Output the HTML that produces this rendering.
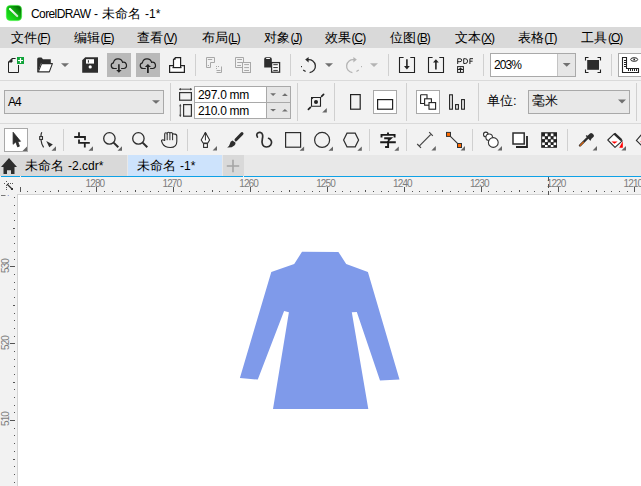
<!DOCTYPE html>
<html><head><meta charset="utf-8">
<style>
*{box-sizing:border-box;margin:0;padding:0}
html,body{width:641px;height:486px;overflow:hidden;background:#fff;font-family:"Liberation Sans",sans-serif;color:#000}
.a{position:absolute}
.t{position:absolute;white-space:nowrap;line-height:1}
svg{position:absolute;left:0;top:0}
u{text-decoration:underline;text-underline-offset:1px;text-decoration-thickness:1px}
</style></head><body>
<div class="a" style="left:0px;top:0px;width:641px;height:27px;background:#fff;"></div>
<div class="a" style="left:0px;top:27px;width:641px;height:21px;background:#d9d9d9;"></div>
<div class="a" style="left:0px;top:48px;width:641px;height:32px;background:#f2f2f2;"></div>
<div class="a" style="left:0px;top:80px;width:641px;height:1px;background:#dadada;"></div>
<div class="a" style="left:0px;top:81px;width:641px;height:42px;background:#f2f2f2;"></div>
<div class="a" style="left:0px;top:123px;width:641px;height:1px;background:#dadada;"></div>
<div class="a" style="left:0px;top:124px;width:641px;height:31px;background:#f2f2f2;"></div>
<div class="a" style="left:0px;top:155px;width:641px;height:21px;background:#e8e8e8;"></div>
<div class="a" style="left:0px;top:155px;width:127px;height:21px;background:#d9d9d9;"></div>
<div class="a" style="left:128px;top:155px;width:94px;height:21px;background:#cde3fc;"></div>
<div class="a" style="left:223px;top:155px;width:21px;height:21px;background:#d9d9d9;"></div>
<div class="a" style="left:0px;top:176px;width:641px;height:1px;background:#0ea1e6;"></div>
<div class="a" style="left:20px;top:176px;width:1px;height:1px;background:#e8f4fb;"></div>
<div class="a" style="left:0px;top:176px;width:1px;height:1px;background:#e8f4fb;"></div>
<div class="a" style="left:243px;top:176px;width:1px;height:1px;background:#e8f4fb;"></div>
<div class="a" style="left:0px;top:177px;width:641px;height:17px;background:#f2f2f2;"></div>
<div class="a" style="left:0px;top:177px;width:17px;height:309px;background:#f2f2f2;"></div>
<div class="a" style="left:17px;top:194px;width:624px;height:1px;background:#d4d4d4;"></div>
<div class="a" style="left:17px;top:194px;width:1px;height:292px;background:#d4d4d4;"></div>
<div class="a" style="left:107px;top:53px;width:24px;height:24px;background:#b9b9b9;"></div>
<div class="a" style="left:136px;top:53px;width:24px;height:24px;background:#b9b9b9;"></div>
<div class="a" style="left:195px;top:54px;width:1px;height:22px;background:#d0d0d0;"></div>
<div class="a" style="left:290px;top:54px;width:1px;height:22px;background:#d0d0d0;"></div>
<div class="a" style="left:388px;top:54px;width:1px;height:22px;background:#d0d0d0;"></div>
<div class="a" style="left:483px;top:54px;width:1px;height:22px;background:#d0d0d0;"></div>
<div class="a" style="left:611px;top:54px;width:1px;height:22px;background:#d0d0d0;"></div>
<div class="a" style="left:490px;top:53px;width:86px;height:24px;background:#fff;border:1px solid #a9a9a9"></div>
<div class="a" style="left:557px;top:54px;width:18px;height:22px;background:#e6e6e6;border-left:1px solid #c4c4c4"></div>
<div class="a" style="left:618px;top:53px;width:30px;height:24px;background:#fff;border:1px solid #a9a9a9"></div>
<div class="a" style="left:4px;top:90px;width:160px;height:24px;background:#e8e8e8;border:1px solid #a9a9a9"></div>
<div class="a" style="left:170px;top:83px;width:1px;height:38px;background:#d0d0d0;"></div>
<div class="a" style="left:297px;top:83px;width:1px;height:38px;background:#d0d0d0;"></div>
<div class="a" style="left:334px;top:83px;width:1px;height:38px;background:#d0d0d0;"></div>
<div class="a" style="left:406px;top:83px;width:1px;height:38px;background:#d0d0d0;"></div>
<div class="a" style="left:478px;top:83px;width:1px;height:38px;background:#d0d0d0;"></div>
<div class="a" style="left:636px;top:83px;width:1px;height:38px;background:#d0d0d0;"></div>
<div class="a" style="left:194px;top:86px;width:97px;height:33px;background:#fff;border:1px solid #a9a9a9"></div>
<div class="a" style="left:267px;top:87px;width:23px;height:31px;background:#e6e6e6;"></div>
<div class="a" style="left:266px;top:87px;width:1px;height:31px;background:#a9a9a9;"></div>
<div class="a" style="left:195px;top:102px;width:95px;height:1px;background:#a9a9a9;"></div>
<div class="a" style="left:373px;top:90px;width:24px;height:24px;background:#fff;border:1px solid #a9a9a9"></div>
<div class="a" style="left:416px;top:90px;width:24px;height:24px;background:#fff;border:1px solid #a9a9a9"></div>
<div class="a" style="left:528px;top:90px;width:102px;height:24px;background:#e8e8e8;border:1px solid #a9a9a9"></div>
<div class="a" style="left:4px;top:128px;width:24px;height:24px;background:#fff;border:1px solid #a9a9a9"></div>
<div class="a" style="left:63px;top:129px;width:1px;height:22px;background:#d0d0d0;"></div>
<div class="a" style="left:187px;top:129px;width:1px;height:22px;background:#d0d0d0;"></div>
<div class="a" style="left:369px;top:129px;width:1px;height:22px;background:#d0d0d0;"></div>
<div class="a" style="left:406px;top:129px;width:1px;height:22px;background:#d0d0d0;"></div>
<div class="a" style="left:472px;top:129px;width:1px;height:22px;background:#d0d0d0;"></div>
<div class="a" style="left:567px;top:129px;width:1px;height:22px;background:#d0d0d0;"></div>
<div class="t" style="left:31px;top:8px;font-size:12px;letter-spacing:-0.6px;color:#000;">CorelDRAW</div>
<div class="t" style="left:94px;top:8px;font-size:12px;color:#000;">-</div>
<div class="t" style="left:102px;top:7px;font-size:13px;color:#000;">未命名</div>
<div class="t" style="left:145px;top:8px;font-size:12px;color:#000;">-1*</div>
<div class="t" style="left:10.7px;top:31px;font-size:13px;color:#000;">文件</div>
<div class="t" style="left:37.3px;top:32px;font-size:12px;letter-spacing:-1px;color:#000;">(<u>F</u>)</div>
<div class="t" style="left:73.9px;top:31px;font-size:13px;color:#000;">编辑</div>
<div class="t" style="left:100.5px;top:32px;font-size:12px;letter-spacing:-1px;color:#000;">(<u>E</u>)</div>
<div class="t" style="left:136.8px;top:31px;font-size:13px;color:#000;">查看</div>
<div class="t" style="left:163.4px;top:32px;font-size:12px;letter-spacing:-1px;color:#000;">(<u>V</u>)</div>
<div class="t" style="left:201.5px;top:31px;font-size:13px;color:#000;">布局</div>
<div class="t" style="left:228.1px;top:32px;font-size:12px;letter-spacing:-1px;color:#000;">(<u>L</u>)</div>
<div class="t" style="left:263.8px;top:31px;font-size:13px;color:#000;">对象</div>
<div class="t" style="left:290.4px;top:32px;font-size:12px;letter-spacing:-1px;color:#000;">(<u>J</u>)</div>
<div class="t" style="left:324.9px;top:31px;font-size:13px;color:#000;">效果</div>
<div class="t" style="left:351.5px;top:32px;font-size:12px;letter-spacing:-1px;color:#000;">(<u>C</u>)</div>
<div class="t" style="left:390.1px;top:31px;font-size:13px;color:#000;">位图</div>
<div class="t" style="left:416.7px;top:32px;font-size:12px;letter-spacing:-1px;color:#000;">(<u>B</u>)</div>
<div class="t" style="left:454.5px;top:31px;font-size:13px;color:#000;">文本</div>
<div class="t" style="left:481.1px;top:32px;font-size:12px;letter-spacing:-1px;color:#000;">(<u>X</u>)</div>
<div class="t" style="left:517.6px;top:31px;font-size:13px;color:#000;">表格</div>
<div class="t" style="left:544.2px;top:32px;font-size:12px;letter-spacing:-1px;color:#000;">(<u>T</u>)</div>
<div class="t" style="left:581.3px;top:31px;font-size:13px;color:#000;">工具</div>
<div class="t" style="left:607.9px;top:32px;font-size:12px;letter-spacing:-1px;color:#000;">(<u>O</u>)</div>
<div class="t" style="left:494px;top:59px;font-size:12px;letter-spacing:-0.9px;color:#000;">203%</div>
<div class="t" style="left:8px;top:96px;font-size:12px;letter-spacing:-1px;color:#000;">A4</div>
<div class="t" style="left:198px;top:89px;font-size:12px;letter-spacing:-0.3px;color:#000;">297.0 mm</div>
<div class="t" style="left:198px;top:105px;font-size:12px;letter-spacing:-0.3px;color:#000;">210.0 mm</div>
<div class="t" style="left:487px;top:94px;font-size:13px;color:#000;">单位:</div>
<div class="t" style="left:532px;top:94px;font-size:13px;color:#000;">毫米</div>
<div class="t" style="left:25px;top:159px;font-size:13px;color:#000;">未命名</div>
<div class="t" style="left:68px;top:160px;font-size:12px;color:#000;">-2.cdr*</div>
<div class="t" style="left:137px;top:159px;font-size:13px;color:#000;">未命名</div>
<div class="t" style="left:180px;top:160px;font-size:12px;color:#000;">-1*</div>
<div class="t" style="left:623.6px;top:178.6px;font-size:10px;letter-spacing:-0.9px;color:#7c7c7c;">1210</div>
<div class="t" style="left:546.8px;top:178.6px;font-size:10px;letter-spacing:-0.9px;color:#7c7c7c;">1220</div>
<div class="t" style="left:469.9px;top:178.6px;font-size:10px;letter-spacing:-0.9px;color:#7c7c7c;">1230</div>
<div class="t" style="left:393.1px;top:178.6px;font-size:10px;letter-spacing:-0.9px;color:#7c7c7c;">1240</div>
<div class="t" style="left:316.2px;top:178.6px;font-size:10px;letter-spacing:-0.9px;color:#7c7c7c;">1250</div>
<div class="t" style="left:239.3px;top:178.6px;font-size:10px;letter-spacing:-0.9px;color:#7c7c7c;">1260</div>
<div class="t" style="left:162.5px;top:178.6px;font-size:10px;letter-spacing:-0.9px;color:#7c7c7c;">1270</div>
<div class="t" style="left:85.6px;top:178.6px;font-size:10px;letter-spacing:-0.9px;color:#7c7c7c;">1280</div>
<div class="t" style="left:-2px;top:262.7px;width:20px;text-align:center;font-size:10px;letter-spacing:-0.9px;color:#7c7c7c;transform:rotate(-90deg);transform-origin:8px 5px">530</div>
<div class="t" style="left:-2px;top:339.5px;width:20px;text-align:center;font-size:10px;letter-spacing:-0.9px;color:#7c7c7c;transform:rotate(-90deg);transform-origin:8px 5px">520</div>
<div class="t" style="left:-2px;top:416.4px;width:20px;text-align:center;font-size:10px;letter-spacing:-0.9px;color:#7c7c7c;transform:rotate(-90deg);transform-origin:8px 5px">510</div>
<svg width="641" height="486" viewBox="0 0 641 486"><rect x="20" y="187" width="1" height="5" fill="#555"/><rect x="27" y="191" width="1" height="1" fill="#555"/><rect x="35" y="191" width="1" height="1" fill="#555"/><rect x="43" y="191" width="1" height="1" fill="#555"/><rect x="50" y="191" width="1" height="1" fill="#555"/><rect x="58" y="190" width="1" height="2" fill="#555"/><rect x="66" y="191" width="1" height="1" fill="#555"/><rect x="73" y="191" width="1" height="1" fill="#555"/><rect x="81" y="191" width="1" height="1" fill="#555"/><rect x="89" y="191" width="1" height="1" fill="#555"/><rect x="96" y="187" width="1" height="5" fill="#555"/><rect x="104" y="191" width="1" height="1" fill="#555"/><rect x="112" y="191" width="1" height="1" fill="#555"/><rect x="120" y="191" width="1" height="1" fill="#555"/><rect x="127" y="191" width="1" height="1" fill="#555"/><rect x="135" y="190" width="1" height="2" fill="#555"/><rect x="143" y="191" width="1" height="1" fill="#555"/><rect x="150" y="191" width="1" height="1" fill="#555"/><rect x="158" y="191" width="1" height="1" fill="#555"/><rect x="166" y="191" width="1" height="1" fill="#555"/><rect x="173" y="187" width="1" height="5" fill="#555"/><rect x="181" y="191" width="1" height="1" fill="#555"/><rect x="189" y="191" width="1" height="1" fill="#555"/><rect x="196" y="191" width="1" height="1" fill="#555"/><rect x="204" y="191" width="1" height="1" fill="#555"/><rect x="212" y="190" width="1" height="2" fill="#555"/><rect x="219" y="191" width="1" height="1" fill="#555"/><rect x="227" y="191" width="1" height="1" fill="#555"/><rect x="235" y="191" width="1" height="1" fill="#555"/><rect x="242" y="191" width="1" height="1" fill="#555"/><rect x="250" y="187" width="1" height="5" fill="#555"/><rect x="258" y="191" width="1" height="1" fill="#555"/><rect x="266" y="191" width="1" height="1" fill="#555"/><rect x="273" y="191" width="1" height="1" fill="#555"/><rect x="281" y="191" width="1" height="1" fill="#555"/><rect x="289" y="190" width="1" height="2" fill="#555"/><rect x="296" y="191" width="1" height="1" fill="#555"/><rect x="304" y="191" width="1" height="1" fill="#555"/><rect x="312" y="191" width="1" height="1" fill="#555"/><rect x="319" y="191" width="1" height="1" fill="#555"/><rect x="327" y="187" width="1" height="5" fill="#555"/><rect x="335" y="191" width="1" height="1" fill="#555"/><rect x="342" y="191" width="1" height="1" fill="#555"/><rect x="350" y="191" width="1" height="1" fill="#555"/><rect x="358" y="191" width="1" height="1" fill="#555"/><rect x="365" y="190" width="1" height="2" fill="#555"/><rect x="373" y="191" width="1" height="1" fill="#555"/><rect x="381" y="191" width="1" height="1" fill="#555"/><rect x="388" y="191" width="1" height="1" fill="#555"/><rect x="396" y="191" width="1" height="1" fill="#555"/><rect x="404" y="187" width="1" height="5" fill="#555"/><rect x="412" y="191" width="1" height="1" fill="#555"/><rect x="419" y="191" width="1" height="1" fill="#555"/><rect x="427" y="191" width="1" height="1" fill="#555"/><rect x="435" y="191" width="1" height="1" fill="#555"/><rect x="442" y="190" width="1" height="2" fill="#555"/><rect x="450" y="191" width="1" height="1" fill="#555"/><rect x="458" y="191" width="1" height="1" fill="#555"/><rect x="465" y="191" width="1" height="1" fill="#555"/><rect x="473" y="191" width="1" height="1" fill="#555"/><rect x="481" y="187" width="1" height="5" fill="#555"/><rect x="488" y="191" width="1" height="1" fill="#555"/><rect x="496" y="191" width="1" height="1" fill="#555"/><rect x="504" y="191" width="1" height="1" fill="#555"/><rect x="511" y="191" width="1" height="1" fill="#555"/><rect x="519" y="190" width="1" height="2" fill="#555"/><rect x="527" y="191" width="1" height="1" fill="#555"/><rect x="534" y="191" width="1" height="1" fill="#555"/><rect x="542" y="191" width="1" height="1" fill="#555"/><rect x="550" y="191" width="1" height="1" fill="#555"/><rect x="558" y="187" width="1" height="5" fill="#555"/><rect x="565" y="191" width="1" height="1" fill="#555"/><rect x="573" y="191" width="1" height="1" fill="#555"/><rect x="581" y="191" width="1" height="1" fill="#555"/><rect x="588" y="191" width="1" height="1" fill="#555"/><rect x="596" y="190" width="1" height="2" fill="#555"/><rect x="604" y="191" width="1" height="1" fill="#555"/><rect x="611" y="191" width="1" height="1" fill="#555"/><rect x="619" y="191" width="1" height="1" fill="#555"/><rect x="627" y="191" width="1" height="1" fill="#555"/><rect x="634" y="187" width="1" height="5" fill="#555"/><rect x="14" y="197" width="1" height="1" fill="#555"/><rect x="14" y="205" width="1" height="1" fill="#555"/><rect x="14" y="213" width="1" height="1" fill="#555"/><rect x="14" y="220" width="1" height="1" fill="#555"/><rect x="13" y="228" width="2" height="1" fill="#555"/><rect x="14" y="236" width="1" height="1" fill="#555"/><rect x="14" y="243" width="1" height="1" fill="#555"/><rect x="14" y="251" width="1" height="1" fill="#555"/><rect x="14" y="259" width="1" height="1" fill="#555"/><rect x="10" y="266" width="5" height="1" fill="#555"/><rect x="14" y="274" width="1" height="1" fill="#555"/><rect x="14" y="282" width="1" height="1" fill="#555"/><rect x="14" y="289" width="1" height="1" fill="#555"/><rect x="14" y="297" width="1" height="1" fill="#555"/><rect x="13" y="305" width="2" height="1" fill="#555"/><rect x="14" y="313" width="1" height="1" fill="#555"/><rect x="14" y="320" width="1" height="1" fill="#555"/><rect x="14" y="328" width="1" height="1" fill="#555"/><rect x="14" y="336" width="1" height="1" fill="#555"/><rect x="10" y="343" width="5" height="1" fill="#555"/><rect x="14" y="351" width="1" height="1" fill="#555"/><rect x="14" y="359" width="1" height="1" fill="#555"/><rect x="14" y="366" width="1" height="1" fill="#555"/><rect x="14" y="374" width="1" height="1" fill="#555"/><rect x="13" y="382" width="2" height="1" fill="#555"/><rect x="14" y="389" width="1" height="1" fill="#555"/><rect x="14" y="397" width="1" height="1" fill="#555"/><rect x="14" y="405" width="1" height="1" fill="#555"/><rect x="14" y="412" width="1" height="1" fill="#555"/><rect x="10" y="420" width="5" height="1" fill="#555"/><rect x="14" y="428" width="1" height="1" fill="#555"/><rect x="14" y="435" width="1" height="1" fill="#555"/><rect x="14" y="443" width="1" height="1" fill="#555"/><rect x="14" y="451" width="1" height="1" fill="#555"/><rect x="13" y="459" width="2" height="1" fill="#555"/><rect x="14" y="466" width="1" height="1" fill="#555"/><rect x="14" y="474" width="1" height="1" fill="#555"/><rect x="14" y="482" width="1" height="1" fill="#555"/><rect x="1" y="195" width="4.5" height="1" fill="#777"/><rect x="7.8" y="195" width="1" height="1" fill="#8a9ad0"/><line x1="548.5" y1="177" x2="548.5" y2="195" stroke="#555" stroke-dasharray="4,3"/><g fill="#555"><rect x="6" y="181" width="1" height="1"/><rect x="4" y="183" width="1" height="1"/><rect x="8" y="183" width="1" height="1"/><rect x="10" y="183" width="1" height="1"/><rect x="12" y="183" width="1" height="1"/><rect x="6" y="185" width="1" height="1"/><rect x="6" y="187" width="1" height="1"/><rect x="6" y="189" width="1" height="1"/></g><path d="M7,184 L12,189" stroke="#333" stroke-width="1.2"/><rect x="11" y="188" width="2" height="2" fill="#333"/><polygon fill="#7f9aea" points="302,251.8 338.4,251.9 346.2,264 367.9,272 399.5,379.6 380,380.6 356.8,312 351.8,312.2 368.3,408.9 273,408.9 288.9,312.2 284.1,311 257.8,379.6 239.9,377.9 271.3,272 294.2,264.1"/><defs><linearGradient id="lg" x1="0" y1="1" x2="1" y2="0"><stop offset="0" stop-color="#22ee22"/><stop offset="0.45" stop-color="#12c412"/><stop offset="1" stop-color="#005200"/></linearGradient>
<linearGradient id="lw" x1="0" y1="0" x2="1" y2="1"><stop offset="0" stop-color="#ffffff"/><stop offset="1" stop-color="#c8e8c8"/></linearGradient></defs>
<rect x="6.4" y="5.4" width="15.2" height="15.2" rx="4" fill="url(#lg)" stroke="#3cf03c" stroke-width="0.7"/>
<path d="M10,9 L17.2,16" stroke="url(#lw)" stroke-width="2.2" stroke-linecap="round"/>

<!-- new doc -->
<g fill="none" stroke="#222" stroke-width="1">
<path d="M8.5,62 V72.5 H18.5 V65"/><path d="M12,58.5 H15.6"/>
</g>
<path d="M8.5,62 L12,58.5 V62 Z" fill="#222" stroke="#222" stroke-width="1" stroke-linejoin="round"/>
<rect x="17" y="57" width="7" height="7" fill="#11a33a"/>
<path d="M18,60.5 H23 M20.5,58 V63" stroke="#fff" stroke-width="1.2"/>
<!-- open folder -->
<path d="M37.2,72.6 V59 Q37.2,57.4 38.8,57.4 H41.5 L43,59.2 H50.8 V63 H41.1 L37.7,72.6 Z" fill="#2d2d2d"/>
<path d="M41.6,63.6 H52.4 L49.3,71.9 H38.3 Z" fill="#fff" stroke="#2d2d2d" stroke-width="1.1" stroke-linejoin="round"/>
<path d="M61,63.3 H69 L65,66.9 Z" fill="#707070"/>
<!-- save -->
<path d="M82.2,60.3 L85.3,57.2 H98 V72.8 H82.2 Z" fill="#2d2d2d"/>
<rect x="86" y="59.2" width="8" height="4.4" fill="#fff"/>
<rect x="87.9" y="60.2" width="1" height="2.4" fill="#2d2d2d"/>
<circle cx="90.2" cy="66.9" r="1.6" fill="#fff"/>
<!-- cloud download -->
<path d="M116.8,68.5 H114 A2.9,2.9 0 0 1 113.4,62.8 A4.7,4.7 0 0 1 122.6,62.3 A3.1,3.1 0 0 1 124,68.5 H121.1" fill="none" stroke="#222" stroke-width="1.2"/>
<path d="M118.9,64.2 V70.3" stroke="#222" stroke-width="1.6"/><path d="M116.2,70 H121.6 L118.9,72.7 Z" fill="#222"/>
<!-- cloud upload -->
<path d="M145.8,68.5 H143 A2.9,2.9 0 0 1 142.4,62.8 A4.7,4.7 0 0 1 151.6,62.3 A3.1,3.1 0 0 1 153,68.5 H150.1" fill="none" stroke="#222" stroke-width="1.2"/>
<path d="M147.9,66.5 V73" stroke="#222" stroke-width="1.8"/><path d="M144.9,66.9 H151 L147.9,64 Z" fill="#222"/>
<!-- print -->
<path d="M169.6,65.6 H184.4 V72.4 H169.6 Z" fill="#fff" stroke="#222" stroke-width="1.2"/>
<path d="M173.5,67.5 V59.5 L175.5,57.6 H180.6 V67.5" fill="#fff" stroke="#222" stroke-width="1.2"/>
<path d="M172.5,67.6 H181.5" stroke="#222" stroke-width="1.2"/>
<path d="M173.5,59.8 L175.6,57.8 V59.8 Z" fill="#222"/>
<!-- cut (disabled) -->
<g fill="none" stroke="#a8a8a8" stroke-width="1">
<path d="M206.5,67.5 V57.5 H214.5 V62.5 H210.5 V67.5 Z"/>
<path d="M207.8,59.5 H212.2 M207.8,65.5 H209"/>
<path d="M216.5,70.5 H220.5 M221.5,66.5 V72.5 H216.5" />
</g>
<g fill="#a8a8a8"><rect x="216" y="66" width="1" height="1"/><rect x="218" y="66" width="1" height="1"/><rect x="216" y="68" width="1" height="1"/></g>
<!-- copy (disabled) -->
<g fill="none" stroke="#a8a8a8" stroke-width="1">
<path d="M242.5,67.5 H235.5 V57.5 H243.5 V62.5"/>
<path d="M237.2,59.5 H242 M237.2,62.5 H242 M237.2,65.5 H241"/>
<rect x="242.5" y="62.5" width="8" height="10"/>
<path d="M244.2,64.6 H249 M244.2,67.6 H249 M244.2,70.5 H249"/>
</g>
<!-- paste -->
<path d="M264.2,67.6 V59 Q264.2,57.2 266,57.2 H270 Q271.8,57.2 271.8,59 V62 H271 V67.6 Z" fill="#2d2d2d"/>
<rect x="266.2" y="58" width="3.7" height="1" fill="#fff"/>
<rect x="271.6" y="62.6" width="8" height="9.6" fill="#fff" stroke="#2d2d2d" stroke-width="1.3"/>
<path d="M273.3,64.7 H277.8 M273.3,67.6 H277.8 M273.3,70.4 H277.8" stroke="#2d2d2d" stroke-width="1"/>
<!-- undo -->
<path d="M308,59.7 A6.5,6.5 0 1 1 309.6,72.6" fill="none" stroke="#2d2d2d" stroke-width="1.3"/>
<path d="M303.2,69.9 L305.6,71.6" stroke="#2d2d2d" stroke-width="1.2"/>
<rect x="301" y="66" width="1" height="1.2" fill="#2d2d2d"/>
<path d="M305.2,59.6 L308.6,56.9 V62.4 Z" fill="#2d2d2d"/>
<path d="M325,63.3 H333 L329,66.9 Z" fill="#707070"/>
<!-- redo (disabled) -->
<path d="M354,59.7 A6.5,6.5 0 1 0 352.4,72.6" fill="none" stroke="#b4b4b4" stroke-width="1.3"/>
<path d="M358.8,69.9 L356.4,71.6" stroke="#b4b4b4" stroke-width="1.2"/>
<rect x="361" y="66" width="1" height="1.2" fill="#b4b4b4"/>
<path d="M356.8,59.6 L353.4,56.9 V62.4 Z" fill="#b4b4b4"/>
<path d="M370,63.3 H378 L374,66.9 Z" fill="#b4b4b4"/>
<!-- import -->
<path d="M403.6,57.5 H399.5 V72.5 H414.5 V57.5 H410.3" fill="none" stroke="#222" stroke-width="1.1"/>
<path d="M406.9,59.2 V67" stroke="#222" stroke-width="1.6"/><path d="M404,66 H409.8 L406.9,69.5 Z" fill="#222"/>
<!-- export -->
<path d="M432.6,57.5 H428.5 V72.5 H443.5 V57.5 H439.3" fill="none" stroke="#222" stroke-width="1.1"/>
<path d="M435.9,62 V69.5" stroke="#222" stroke-width="1.6"/><path d="M433,62.6 H438.8 L435.9,59.2 Z" fill="#222"/>
<!-- pdf -->
<g fill="none" stroke="#222" stroke-width="1">
<path d="M457.7,64 V58.7 H459.9 Q461.7,58.7 461.7,60.2 Q461.7,61.7 459.9,61.7 H457.7"/>
<path d="M463.7,58.7 V63.5 H465.2 Q467.6,63.5 467.6,61.1 Q467.6,58.7 465.2,58.7 Z"/>
<path d="M469.9,64 V58.7 H473 M469.9,61.2 H472.6"/>
<rect x="457.6" y="66.6" width="5.8" height="5.8"/>
<path d="M457.8,69.5 H463.2 M460.5,69.5 V72.2"/>
</g>
<path d="M458.6,69.2 L460.5,67.2 L462.4,69.2 Z" fill="#222"/>
<!-- fullscreen -->
<path d="M585.5,60.5 V57.5 H588.5 M597.5,57.5 H600.5 V60.5 M600.5,69.5 V72.5 H597.5 M588.5,72.5 H585.5 V69.5" fill="none" stroke="#222" stroke-width="1.1"/>
<rect x="587.2" y="60" width="11.8" height="9.8" fill="#2d2d2d"/>
<!-- rulers btn icon -->
<path d="M622.5,57.5 H626.5 V68.5 H638.5 V72.5 H622.5 Z" fill="none" stroke="#222" stroke-width="1.1"/>
<path d="M624,60.5 H626.5 M624,62.5 H626.5 M624,64.5 H626.5 M624,66.5 H626.5 M628.5,68.5 V71 M630.5,68.5 V71 M632.5,68.5 V71 M634.5,68.5 V71 M636.5,68.5 V71" stroke="#222" stroke-width="1"/>
<ellipse cx="634.2" cy="59.5" rx="3.5" ry="1.8" fill="none" stroke="#222" stroke-width="1"/>
<circle cx="634.2" cy="59.5" r="0.9" fill="#222"/>

<!-- A4 combo arrow -->
<path d="M152,100.2 H160 L156,103.8 Z" fill="#707070"/>
<!-- width/height icons -->
<path d="M179.2,89.2 H191.8" stroke="#444" stroke-width="1"/><path d="M179,89.2 L181,88 V90.4 Z M192,89.2 L190,88 V90.4 Z" fill="#444"/>
<rect x="179.6" y="92.6" width="11.8" height="7.6" fill="none" stroke="#333" stroke-width="1.2"/>
<path d="M180.3,104.4 V116.6" stroke="#444" stroke-width="1"/><path d="M180.3,104.2 L179.1,106.2 H181.5 Z M180.3,116.8 L179.1,114.8 H181.5 Z" fill="#444"/>
<rect x="183.6" y="104.6" width="7.8" height="11.6" fill="none" stroke="#333" stroke-width="1.2"/>
<!-- spin arrows -->
<g fill="#707070">
<path d="M270.2,93.3 H276 L273.1,96 Z"/><path d="M282,96 H287.8 L284.9,93.3 Z"/>
<path d="M270.2,108.9 H276 L273.1,111.6 Z"/><path d="M282,111.6 H287.8 L284.9,108.9 Z"/>
</g>
<!-- scale icon -->
<path d="M311.5,99 L313,97.5 H320.5 V106.3 H311.5 Z" fill="none" stroke="#222" stroke-width="1.1"/>
<path d="M311,97 H313.6 L311,99.6 Z" fill="#222"/>
<circle cx="316" cy="102" r="2" fill="#222"/>
<path d="M321.6,96.4 L323.6,94.4 M310.4,107.4 L308.4,109.4" stroke="#222" stroke-width="1.7" stroke-linecap="round"/>
<path d="M322.2,112.6 H326.8 V108.1 Z" fill="#666"/>
<!-- portrait/landscape -->
<rect x="350.6" y="94.6" width="9.6" height="14.6" fill="none" stroke="#222" stroke-width="1.2"/>
<rect x="377.6" y="99.6" width="15" height="9.6" fill="none" stroke="#222" stroke-width="1.2"/>
<!-- all pages -->
<path d="M420.6,94.8 H427 V99 M420.6,94.8 V103.5 H424.5" fill="none" stroke="#222" stroke-width="1.1"/>
<rect x="424.6" y="98.8" width="6.8" height="6.4" fill="#fff" stroke="#222" stroke-width="1.1"/>
<rect x="429" y="102.6" width="6.6" height="6.6" fill="#fff" stroke="#222" stroke-width="1.1"/>
<!-- current page bars -->
<rect x="449.6" y="94.8" width="2.8" height="14.4" fill="none" stroke="#222" stroke-width="1.1"/>
<rect x="455.6" y="104.6" width="2.8" height="4.6" fill="none" stroke="#222" stroke-width="1.1"/>
<rect x="461.6" y="99.6" width="2.8" height="9.6" fill="none" stroke="#222" stroke-width="1.1"/>
<!-- units arrow -->
<path d="M618,99.6 H626 L622,103.6 Z" fill="#707070"/>
<!-- zoom combo arrow -->
<path d="M562.8,63 H570.6 L566.7,66.8 Z" fill="#707070"/>

<!-- toolbox triangles -->
<g fill="#666">
<path d="M22.5,151 H27 V146.5 Z"/>
<path d="M51.5,150.7 H56 V146.3 Z"/>
<path d="M88.5,150.7 H93 V146.3 Z"/>
<path d="M117.5,150.7 H122 V146.3 Z"/>
<path d="M212.6,150.6 H217 V146.1 Z"/>
<path d="M299.6,150.8 H304.1 V146.4 Z"/>
<path d="M328.5,150.8 H333 V146.4 Z"/>
<path d="M357.3,150.8 H361.8 V146.4 Z"/>
<path d="M394.3,150.8 H398.8 V146.4 Z"/>
<path d="M431.4,150.6 H435.8 V146.1 Z"/>
<path d="M460.6,150.6 H465 V146.1 Z"/>
<path d="M497.5,150.6 H502 V146.1 Z"/>
<path d="M592.6,150.6 H597 V146.1 Z"/>
<path d="M621.4,150.6 H626 V146.1 Z"/>
</g>
<!-- pick arrow -->
<path d="M13.1,132.2 V144.3 L15.8,141.9 L17.6,146.9 L19.4,146.2 L17.8,141.5 L20.5,141.3 Z" fill="#2d2d2d" stroke="#2d2d2d" stroke-width="0.8" stroke-linejoin="round"/>
<!-- shape tool -->
<path d="M41.8,132.3 Q40.8,134.2 41,136.2 M41,140 Q41.5,144.5 43.6,147.4" fill="none" stroke="#2d2d2d" stroke-width="1.2"/>
<rect x="39.7" y="136.6" width="2.8" height="2.8" fill="#fff" stroke="#2d2d2d" stroke-width="1.1"/>
<path d="M46.3,141.1 L52.8,144.5 L49.3,147.3 Z" fill="#2d2d2d"/>
<!-- crop -->
<path d="M74.2,137 H85 V140.2 M79,132.2 V137 M79,139.6 V142.8 H89.8 M84.8,142.8 V147.6" fill="none" stroke="#222" stroke-width="1.8"/>
<!-- zoom -->
<circle cx="109.4" cy="138.4" r="5.7" fill="none" stroke="#2d2d2d" stroke-width="1.3"/>
<path d="M113.6,142.6 L118.3,147.3" stroke="#2d2d2d" stroke-width="2"/>
<circle cx="138.4" cy="138.4" r="5.7" fill="none" stroke="#2d2d2d" stroke-width="1.3"/>
<path d="M142.6,142.6 L147.3,147.3" stroke="#2d2d2d" stroke-width="2"/>
<!-- hand -->
<path d="M164.7,140.5 V134 Q164.7,132.7 165.9,132.7 Q167.2,132.7 167.2,134 V133.2 Q167.2,132.2 168.6,132.2 Q169.9,132.2 169.9,133.3 Q170,132.5 171.2,132.5 Q172.5,132.6 172.6,133.8 V134.4 Q172.8,133.8 173.8,133.9 Q176.8,134 176.8,136 V141.5 Q176.8,147.5 170.5,147.5 Q164.5,147.5 162.5,143.5 L161.5,141 Q161.4,139.8 162.8,139.8 Z" fill="none" stroke="#2d2d2d" stroke-width="1.1" stroke-linejoin="round"/>
<path d="M167.2,134 V140.2 M169.9,133.3 V140.2 M172.6,134.2 V140.2" stroke="#2d2d2d" stroke-width="1"/>
<!-- pen -->
<path d="M205.4,132.6 L209.6,140 L207.8,143 H203.1 L201.2,140 Z" fill="#fff" stroke="#2d2d2d" stroke-width="1.1" stroke-linejoin="round"/>
<path d="M205.4,134 V140.4" stroke="#2d2d2d" stroke-width="1"/><circle cx="205.4" cy="133.5" r="1" fill="#2d2d2d"/>
<rect x="203.6" y="143.6" width="3.8" height="3.8" fill="#fff" stroke="#2d2d2d" stroke-width="1.1"/>
<!-- brush -->
<path d="M242,133.6 L236,139.8" stroke="#2d2d2d" stroke-width="3" stroke-linecap="round"/>
<path d="M232.4,140.6 Q230.2,141.5 229.8,144 Q229.4,146.3 227.2,147.6 Q232,147.8 234.4,145.4 Q236,143.8 235.4,142.4 Z" fill="#2d2d2d"/>
<!-- curve -->
<path d="M257.4,137 C255.6,134.2 257.8,132.2 260,132.4 C263.2,132.8 263,136.3 262.3,139.2 C261.4,143 262.4,147 266.5,147 C270.4,147 272.2,143.8 271.4,141.2 C271,140 270,138.8 268.6,138.3" fill="none" stroke="#2d2d2d" stroke-width="1.7" stroke-linecap="round"/>
<!-- rect/ellipse/polygon -->
<rect x="285.6" y="132.6" width="15" height="14.6" fill="none" stroke="#2d2d2d" stroke-width="1.2"/>
<circle cx="322.1" cy="139.9" r="7.5" fill="none" stroke="#2d2d2d" stroke-width="1.2"/>
<path d="M347,133.2 H355.2 L358.6,140 L355.2,146.8 H347 L343.6,140 Z" fill="none" stroke="#2d2d2d" stroke-width="1.2"/>
<!-- text tool 字 -->
<path d="M388,132.4 V134.5 M381.5,137.5 V134.9 H394.6 V137.5 M384.2,138.2 H390.8 L388,140.8 M380.2,142.2 H395.8 M388.1,141 V147 H385.1" fill="none" stroke="#1a1a1a" stroke-width="1.9"/>
<!-- dimension -->
<path d="M419.7,145.7 L430.6,134.6 M417.2,144 L421,147.8 M429.2,132.2 L432.8,135.8" stroke="#444" stroke-width="1.2"/>
<!-- connector -->
<path d="M448.4,134.3 L459.5,145.4" stroke="#333" stroke-width="1.1"/>
<rect x="446.5" y="132.4" width="4" height="4" fill="#ff6a00" stroke="#333" stroke-width="1"/>
<rect x="457.5" y="143.5" width="4" height="4" fill="#ff6a00" stroke="#333" stroke-width="1"/>
<!-- blend -->
<circle cx="485.8" cy="134.4" r="2.3" fill="#fff" stroke="#333" stroke-width="1.1"/>
<circle cx="489.2" cy="137.3" r="3.3" fill="#fff" stroke="#333" stroke-width="1.1"/>
<circle cx="493.3" cy="142.5" r="4.9" fill="#fff" stroke="#333" stroke-width="1.1"/>
<!-- shadow -->
<rect x="513" y="133" width="11.2" height="11" fill="#fff" stroke="#2d2d2d" stroke-width="1.5"/>
<path d="M516,147 H527 V136" fill="none" stroke="#222" stroke-width="1.8"/>
<!-- transparency checker -->
<rect x="541.2" y="132.2" width="15.8" height="15.6" fill="#222"/>
<g fill="#fff">
<rect x="545" y="133.5" width="2.6" height="2.6"/><rect x="550.8" y="133.5" width="2.6" height="2.6"/>
<rect x="542.2" y="136.5" width="2.6" height="2.6"/><rect x="548" y="136.5" width="2.6" height="2.6"/><rect x="553.6" y="136.5" width="2.6" height="2.6"/>
<rect x="545" y="139.5" width="2.6" height="2.6"/><rect x="550.8" y="139.5" width="2.6" height="2.6"/>
<rect x="542.2" y="142.5" width="2.6" height="2.6"/><rect x="548" y="142.5" width="2.6" height="2.6"/><rect x="553.6" y="142.5" width="2.6" height="2.6"/>
<rect x="545" y="145" width="2.6" height="2"/><rect x="550.8" y="145" width="2.6" height="2"/>
</g>
<!-- eyedropper -->
<path d="M580,145.5 L588.5,137" stroke="#2d2d2d" stroke-width="2.4" stroke-linecap="round"/>
<path d="M580.2,145.3 L583.4,142.1" stroke="#e66a10" stroke-width="1.2" stroke-linecap="round"/>
<path d="M587,136.2 L590,133.4 Q591.2,132.4 592.4,133.6 L593.6,134.8 Q594.6,136 593.4,137 L590.4,139.8 Z" fill="#2d2d2d"/>
<path d="M586.2,135.6 L590.8,140.2" stroke="#2d2d2d" stroke-width="1.4"/>
<!-- fill -->
<path d="M607.8,140 L614.4,133.6 L622.2,140.8 L615,147.4 Z" fill="#fff" stroke="#2d2d2d" stroke-width="1.1" stroke-linejoin="round"/>
<path d="M614.4,133.6 L621.4,140.2" stroke="#2d2d2d" stroke-width="2.4"/>
<path d="M611.4,141.4 H617.6 L614.5,143.8 Z" fill="#ff0000"/>
<path d="M622.8,141.2 V147.8 H619.2 Z" fill="#ff0000"/>
<!-- partial icon at right edge -->
<path d="M642,134 L636.4,140.4 L642,146" fill="none" stroke="#2d2d2d" stroke-width="1.1"/>
<path d="M640,141.4 H642 V143 Z" fill="#ff0000"/>

<!-- tab home -->
<path d="M1,167 L9,158 L17,167 H14.5 V174 H11 V170.2 H7 V174 H3.5 V167 Z" fill="#2d2d2d"/>
<!-- plus tab -->
<path d="M226.8,166 H239.2 M233,159.8 V172.2" stroke="#a4a4a4" stroke-width="1.6"/>
</svg>
</body></html>
